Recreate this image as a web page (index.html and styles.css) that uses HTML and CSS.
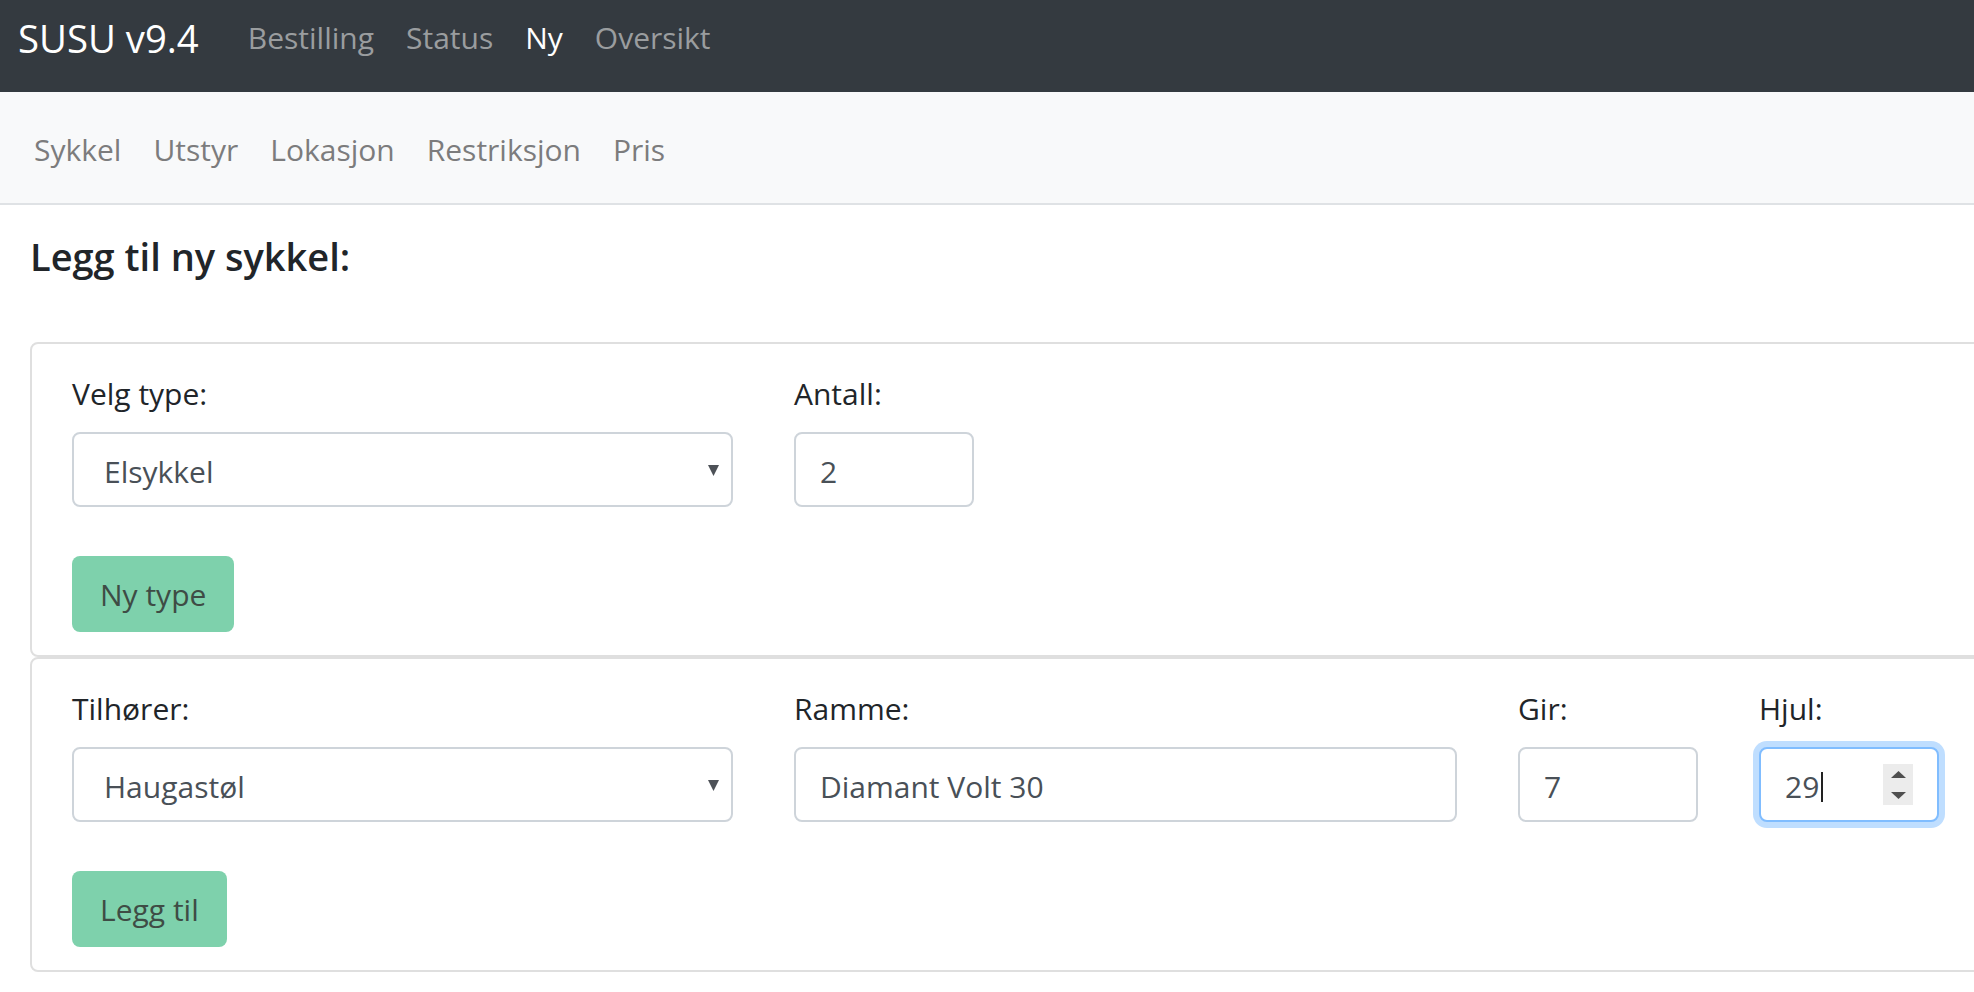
FILE: index.html
```html
<!DOCTYPE html>
<html lang="no">
<head>
<meta charset="utf-8">
<title>SUSU v9.4</title>
<link rel="stylesheet" href="styles.css">
</head>
<body>
<nav class="topbar">
  <a class="brand">SUSU v9.4</a>
  <ul class="topnav">
    <li><a class="toplink">Bestilling</a></li>
    <li><a class="toplink">Status</a></li>
    <li><a class="toplink active">Ny</a></li>
    <li><a class="toplink">Oversikt</a></li>
  </ul>
</nav>
<nav class="subbar">
  <ul class="subnav">
    <li><a class="sublink">Sykkel</a></li>
    <li><a class="sublink">Utstyr</a></li>
    <li><a class="sublink">Lokasjon</a></li>
    <li><a class="sublink">Restriksjon</a></li>
    <li><a class="sublink">Pris</a></li>
  </ul>
</nav>
<main class="page">
  <h5 class="title">Legg til ny sykkel:</h5>
  <section class="card">
    <div class="fields fields-type">
      <div class="field">
        <label class="label">Velg type:</label>
        <div class="control select"><span class="value">Elsykkel</span><svg class="arrow" viewBox="0 0 11 12" width="11" height="12"><path d="M0 1 H11 L5.5 12 Z" fill="#4d5157"/></svg></div>
      </div>
      <div class="field">
        <label class="label">Antall:</label>
        <div class="control"><span class="value">2</span></div>
      </div>
    </div>
    <button class="btn">Ny type</button>
  </section>
  <section class="card">
    <div class="fields fields-bike">
      <div class="field">
        <label class="label">Tilhører:</label>
        <div class="control select"><span class="value">Haugastøl</span><svg class="arrow" viewBox="0 0 11 12" width="11" height="12"><path d="M0 1 H11 L5.5 12 Z" fill="#4d5157"/></svg></div>
      </div>
      <div class="field">
        <label class="label">Ramme:</label>
        <div class="control"><span class="value">Diamant Volt 30</span></div>
      </div>
      <div class="field">
        <label class="label">Gir:</label>
        <div class="control"><span class="value">7</span></div>
      </div>
      <div class="field">
        <label class="label">Hjul:</label>
        <div class="control focused"><span class="value">29</span><span class="cursor"></span><span class="spinner"><svg viewBox="0 0 15 7" width="15" height="7"><path d="M0 7 L7.5 0 L15 7 Z" fill="#4f4f4f"/></svg><svg viewBox="0 0 15 7" width="15" height="7"><path d="M0 0 H15 L7.5 7 Z" fill="#4f4f4f"/></svg></span></div>
      </div>
    </div>
    <button class="btn">Legg til</button>
  </section>
</main>
</body>
</html>
```

FILE: styles.css
```css
html, body {
  margin: 0;
  padding: 0;
  overflow: hidden;
  background: #ffffff;
}

body {
  font-family: "Open Sans", "Noto Sans", sans-serif;
  font-size: 30px;
  color: #212529;
}

ul {
  list-style: none;
  margin: 0;
  padding: 0;
}

a {
  text-decoration: none;
}

.topbar {
  display: flex;
  align-items: center;
  background: #343a40;
  padding: 11px 18px 27px;
  line-height: 54px;
}

.brand {
  font-size: 38.3px;
  color: #ffffff;
  margin-right: 33px;
}

.topnav {
  display: flex;
}

.toplink {
  display: block;
  padding: 0 16px;
  color: #9a9d9f;
}

.toplink.active {
  color: #ffffff;
}

.subbar {
  background: #f8f9fa;
  border-bottom: 2px solid #dfe2e5;
  padding: 35px 18px 31px;
  line-height: 45px;
}

.subnav {
  display: flex;
}

.sublink {
  display: block;
  padding: 0 16px;
  color: #7c7c7d;
}

.page {
  padding: 28px 0 0 30px;
}

.title {
  margin: 0 0 63px;
  font-size: 38px;
  font-weight: 600;
  line-height: 46px;
  color: #212529;
}

.card {
  width: 1960px;
  box-sizing: border-box;
  border: 2px solid #dfdfdf;
  border-radius: 8px;
  padding: 27px 40px 23px;
}

.fields {
  display: grid;
  column-gap: 61px;
  margin-bottom: 49px;
}

.fields-type {
  grid-template-columns: 661px 180px;
}

.fields-bike {
  grid-template-columns: 661px 663px 180px 180px;
}

.label {
  display: block;
  line-height: 45px;
  margin-bottom: 16px;
}

.control {
  display: flex;
  align-items: center;
  box-sizing: border-box;
  height: 75px;
  border: 2px solid #ced4da;
  border-radius: 8px;
  padding: 4px 24px 0;
  color: #495057;
  background: #ffffff;
}

.select {
  padding: 4px 12px 0 30px;
  justify-content: space-between;
}

.select .arrow {
  margin-top: -4px;
}

.focused {
  border-color: #80bdff;
  box-shadow: 0 0 0 6px #bfdeff;
}

.cursor {
  width: 2px;
  height: 30px;
  background: #222222;
  margin-left: 2px;
}

.spinner {
  margin-left: auto;
  margin-top: -4px;
  width: 30px;
  height: 41px;
  background: #ececec;
  display: flex;
  flex-direction: column;
  align-items: center;
  justify-content: center;
  gap: 14px;
}

.spinner svg {
  display: block;
}

.btn {
  display: block;
  height: 76px;
  border: none;
  border-radius: 8px;
  padding: 0 28px;
  background: #7ed1ac;
  color: #3e4c45;
  font-family: inherit;
  font-size: 30px;
}
```
